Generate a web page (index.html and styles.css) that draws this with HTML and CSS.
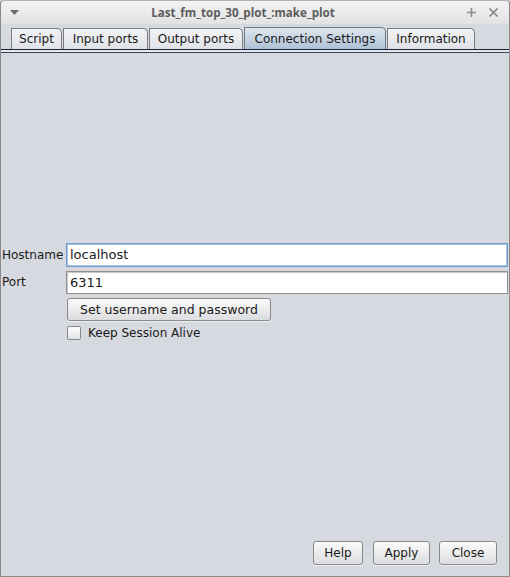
FILE: index.html
```html
<!DOCTYPE html>
<html>
<head>
<meta charset="utf-8">
<link rel="stylesheet" href="styles.css">
</head>
<body>
<div class="window">
  <div class="titlebar">
    <svg class="menu-arrow" width="9" height="5" viewBox="0 0 9 5"><path d="M0 0 H9 L4.5 5 Z" fill="#6a6a6a"/></svg>
    <span class="title">Last_fm_top_30_plot_:make_plot</span>
    <span class="ctrls">
      <svg width="9" height="9" viewBox="0 0 9 9"><path d="M4.5 0 V9 M0 4.5 H9" stroke="#8a8a8a" stroke-width="1.6"/></svg>
      <svg width="9" height="9" viewBox="0 0 9 9"><path d="M0.5 0.5 L8.5 8.5 M8.5 0.5 L0.5 8.5" stroke="#8a8a8a" stroke-width="1.6"/></svg>
    </span>
  </div>
  <div class="tabs">
    <div class="tab t1">Script</div>
    <div class="tab t2">Input ports</div>
    <div class="tab t3">Output ports</div>
    <div class="tab t4 selected">Connection Settings</div>
    <div class="tab t5">Information</div>
  </div>
  <div class="tabline"></div>
  <div class="content">
    <div class="form">
      <label class="lbl">Hostname</label>
      <div class="field focused">localhost</div>
      <label class="lbl">Port</label>
      <div class="field">6311</div>
      <span></span>
      <div class="row"><button class="btn wide">Set username and password</button></div>
      <span></span>
      <div class="check"><span class="box"></span><span>Keep Session Alive</span></div>
    </div>
  </div>
  <div class="footer">
    <button class="btn b-help">Help</button>
    <button class="btn b-apply">Apply</button>
    <button class="btn b-close">Close</button>
  </div>
</div>
</body>
</html>
```
FILE: styles.css
```css
html, body {
  margin: 0;
  padding: 0;
  background: #d6d9df;
}
body {
  font-family: "DejaVu Sans", sans-serif;
  font-size: 12px;
  color: #1a1a1a;
}
.window {
  width: 510px;
  height: 577px;
  box-sizing: border-box;
  border: 1px solid #8a8a8a;
  border-top: none;
  border-radius: 4px 4px 0 0;
  background: #d6d9df;
  display: flex;
  flex-direction: column;
  overflow: hidden;
}
.titlebar {
  height: 24px;
  flex: none;
  display: flex;
  align-items: center;
  background: linear-gradient(#f3f3f3, #e2e2e2);
  border-top: 1px solid #b0b0b0;
  border-radius: 4px 4px 0 0;
  box-sizing: border-box;
}
.menu-arrow {
  margin-left: 9px;
  margin-top: -1px;
}
.title {
  flex: 1;
  text-align: center;
  font-family: "Open Sans", sans-serif;
  font-weight: bold;
  font-size: 11.6px;
  color: #5c5c5c;
}
.ctrls {
  display: flex;
  gap: 13px;
  margin-right: 11px;
  align-items: center;
}
.tabs {
  display: flex;
  padding-left: 10px;
  margin-top: 3px;
  height: 22px;
  flex: none;
  align-items: flex-end;
}
.tab {
  box-sizing: border-box;
  height: 21px;
  border: 1px solid #7c7c7c;
  border-bottom: none;
  border-radius: 0 5px 0 0;
  background: linear-gradient(#f2f3f5, #dfe2e7);
  display: flex;
  align-items: center;
  justify-content: center;
  margin-right: 1px;
}
.t1 { width: 51px; }
.t2 { width: 85px; }
.t3 { width: 94px; }
.t4 { width: 142px; }
.t5 { width: 88px; }
.tab.selected {
  height: 22px;
  background: linear-gradient(#dfe6ee, #aec2d6);
  border-color: #6e7a88;
}
.tabline {
  flex: none;
  height: 2px;
  border-top: 1px solid #18223c;
  border-bottom: 1px solid #3c4558;
  background: #e4e8ee;
}
.content {
  flex: 1;
  display: flex;
  flex-direction: column;
  justify-content: center;
  padding-top: 1px;
}
.form {
  display: grid;
  grid-template-columns: 64px 442px;
  row-gap: 4px;
  padding-left: 1px;
  align-items: center;
}
.lbl {
  font-size: 12px;
}
.field {
  box-sizing: border-box;
  height: 23px;
  border: 1px solid #8f8f8f;
  box-shadow: inset 1px 1px 0 #c8c8c8;
  background: #fff;
  font-size: 13px;
  padding-left: 3px;
  display: flex;
  align-items: center;
}
.field.focused {
  height: 24px;
  border: 1px solid #6f9ccc;
  box-shadow: inset 0 0 0 1px #a9c6e4;
}
.row {
  display: flex;
}
.btn {
  font-family: "DejaVu Sans", sans-serif;
  font-size: 12px;
  color: #1a1a1a;
  box-sizing: border-box;
  height: 23px;
  border: 1px solid #8a8a8a;
  border-radius: 3px;
  background: linear-gradient(#fbfbfb, #dcdde0);
  padding: 0;
  margin: 0;
  box-shadow: 0 1px 0 #eef0f3;
}
.btn.wide {
  width: 204px;
  margin-left: 1px;
  font-size: 12.5px;
}
.check {
  display: flex;
  align-items: center;
  gap: 7px;
  margin-left: 1px;
  height: 16px;
}
.box {
  width: 12px;
  height: 12px;
  border: 1px solid #8a8a8a;
  border-radius: 2px;
  background: linear-gradient(#fdfdfd, #e2e3e6);
}
.footer {
  flex: none;
  height: 47px;
  display: flex;
  justify-content: flex-end;
  align-items: flex-start;
  padding-right: 12px;
  padding-top: 12px;
  box-sizing: border-box;
}
.footer .btn {
  height: 24px;
}
.b-help { width: 50px; margin-right: 10px; }
.b-apply { width: 57px; margin-right: 9px; }
.b-close { width: 58px; }
```
